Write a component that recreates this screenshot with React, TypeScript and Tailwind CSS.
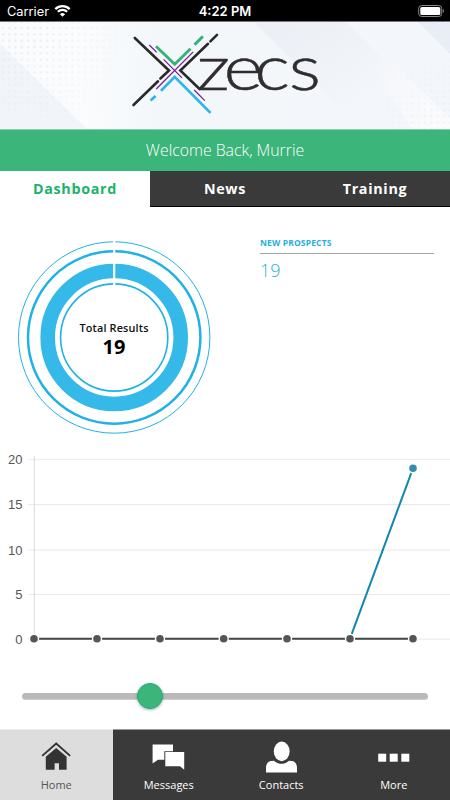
import { useState } from "react";

const tabs = ["Dashboard", "News", "Training"];

const ticks = [
  { label: "20", y: 459.7 },
  { label: "15", y: 504.5 },
  { label: "10", y: 550.1 },
  { label: "5", y: 594.5 },
  { label: "0", y: 639.2 },
];

const pointsX = [34, 97, 160, 223.7, 287, 350, 413];

function StatusBar() {
  return (
    <div className="h-[22px] bg-black border-b border-[#777777] flex items-center justify-between pl-[7px] pr-[5px] text-white font-['Inter',sans-serif] relative">
      <div className="flex items-center gap-[5px]">
        <span className="text-[12.8px] leading-[20px] pt-[2px]">Carrier</span>
        <svg width="17" height="12" viewBox="0 0 16 12" fill="none" stroke="white" strokeWidth="2.2">
          <path d="M0.8 4.1a10.4 10.4 0 0 1 14.4 0" />
          <path d="M3.3 6.8a6.8 6.8 0 0 1 9.4 0" />
          <path d="M8 11.8 5.4 9.2a3.7 3.7 0 0 1 5.2 0z" fill="white" stroke="none" />
        </svg>
      </div>
      <span className="absolute inset-x-0 text-center text-[13px] leading-[20px] font-semibold pt-[1px]">
        4:22 PM
      </span>
      <svg width="27" height="14" viewBox="0 0 27 14">
        <rect x="0.7" y="1.5" width="23" height="11" rx="3" fill="none" stroke="#8a8a8a" />
        <rect x="2.3" y="3" width="20" height="8" rx="1.6" fill="white" />
        <path d="M24.8 5v4c1.5-.6 1.5-3.4 0-4z" fill="#8a8a8a" />
      </svg>
    </div>
  );
}

function Banner() {
  return (
    <svg className="block" width="450" height="107" viewBox="0 22 450 107">
      <defs>
        <pattern id="dots" width="6.3" height="6.3" patternUnits="userSpaceOnUse">
          <circle cx="3" cy="3" r="1" fill="#dce3ec" />
        </pattern>
        <radialGradient id="fade" gradientUnits="userSpaceOnUse" cx="20" cy="22" r="120">
          <stop offset="0" stopColor="white" />
          <stop offset="1" stopColor="black" />
        </radialGradient>
        <radialGradient id="fadeRight" gradientUnits="userSpaceOnUse" cx="440" cy="129" r="80">
          <stop offset="0" stopColor="#999999" />
          <stop offset="1" stopColor="black" />
        </radialGradient>
        <linearGradient id="base" x1="0" x2="1" y1="0" y2="0">
          <stop offset="0" stopColor="#f9fbfd" />
          <stop offset="0.18" stopColor="#fafcfd" />
          <stop offset="0.35" stopColor="#f4f7fa" />
          <stop offset="1" stopColor="#f3f6fa" />
        </linearGradient>
        <linearGradient id="band" gradientUnits="userSpaceOnUse" x1="290" x2="350" y1="22" y2="110">
          <stop offset="0" stopColor="#e8edf4" />
          <stop offset="1" stopColor="#f3f6fa" />
        </linearGradient>
        <linearGradient id="shine" gradientUnits="userSpaceOnUse" x1="370" x2="440" y1="60" y2="129">
          <stop offset="0" stopColor="#fbfbfd" stopOpacity="0" />
          <stop offset="1" stopColor="#fbfbfd" />
        </linearGradient>
        <mask id="maskLeft">
          <rect y="22" width="140" height="107" fill="url(#fade)" />
        </mask>
        <mask id="maskRight">
          <rect x="350" y="22" width="100" height="107" fill="url(#fadeRight)" />
        </mask>
      </defs>
      <rect y="22" width="450" height="107" fill="url(#base)" />
      <path d="M0 44 87 129H0z" fill="#f1f5f9" />
      <path d="M254 22h92l107 107h-92z" fill="url(#band)" opacity="0.7" />
      <path d="M343 22h10l97 97v10h-38z" fill="url(#shine)" />
      <path d="M418 22h32v32z" fill="#e9eef6" />
      <rect y="22" width="140" height="107" fill="url(#dots)" mask="url(#maskLeft)" />
      <rect x="350" y="22" width="100" height="107" fill="url(#dots)" mask="url(#maskRight)" />

      <g fill="none" strokeWidth="2.6">
        <g stroke="#2b2a2b" strokeLinecap="round">
          <path d="M134.8 38 169 70.5l-8.6 8M158 81.3 133.5 105" />
          <path d="M217 34.8l-6.6 6.6M208 43.8 180.3 70.5l19 18.3" />
        </g>
        <path d="M156 46.3l18.7 18 15.8-15.6M194.5 44.8l8.4-8.4" stroke="#34b277" strokeWidth="2.9" />
        <path d="M161 90.7l13.7-13.8 35.8 36M155.6 96l-5 4.6" stroke="#29b6ea" strokeWidth="2.7" />
        <path
          d="M149.3 45l7.4 7.4M163.6 59.3 182 77.8M193.2 51.8 156.2 89M194.2 90l10.6 10.6"
          stroke="#7b139e"
          strokeWidth="1.2"
        />
      </g>
      <text
        className="font-['Lato',sans-serif] font-light"
        transform="translate(196.500 90) scale(1.2 1)"
        x="0 22.6 48.2 76.9"
        fontSize="63"
        fill="#2f2d2e"
        stroke="#2f2d2e"
        strokeWidth="0.5"
      >
        zecs
      </text>
    </svg>
  );
}

function ResultsRing() {
  return (
    <svg className="block" width="196" height="196" viewBox="16 240 196 196">
      <g fill="none" stroke="#1fb2e7">
        <circle cx="114.2" cy="337.5" r="95.7" strokeWidth="1" />
        <circle cx="114.2" cy="337.5" r="86.2" strokeWidth="2.5" />
        <circle cx="114.2" cy="337.5" r="66.5" strokeWidth="14.6" stroke="#35b9e9" />
        <circle cx="114.2" cy="337.5" r="53.6" strokeWidth="1.6" />
      </g>
      <path d="M114.2 240v46" stroke="white" strokeWidth="2.2" />
      <g className="font-['Open_Sans',sans-serif] font-bold" textAnchor="middle" fill="#111111">
        <text x="114" y="332" fontSize="10.9" textLength="69" className="font-semibold">
          Total Results
        </text>
        <text x="114" y="354" fontSize="20" fill="black">
          19
        </text>
      </g>
    </svg>
  );
}

function Chart() {
  return (
    <svg className="block" width="450" height="210" viewBox="0 448 450 210">
      {ticks.map((tick) => (
        <g key={tick.label}>
          <path d={`M28 ${tick.y}H450`} stroke="#e9e9e9" />
          <text
            x="22.5"
            y={tick.y + 4.4}
            textAnchor="end"
            fontSize="13"
            fill="#555555"
            className="font-['Liberation_Sans',sans-serif]"
          >
            {tick.label}
          </text>
        </g>
      ))}
      <path d="M34.3 456v183" stroke="#dddddd" />
      <path d="M34 638.7H413" stroke="#444444" strokeWidth="2" />
      <path d="M350 638.7 413 468.3" stroke="#1088ac" strokeWidth="2" />
      {pointsX.map((x) => (
        <circle key={x} cx={x} cy="638.7" r="4.5" fill="#555555" stroke="white" strokeWidth="1.4" />
      ))}
      <circle cx="413" cy="468.3" r="4.5" fill="#358dae" stroke="white" strokeWidth="1.4" />
    </svg>
  );
}

const navItems = [
  {
    label: "Home",
    icon: (
      <g fill="#333333">
        <path d="M15.2 7 25.6 15.8V28.8H18v-6.5h-4.4v6.5H4.8V15.8z" />
        <path d="M1.2 14.9 15.2 2.6 29.2 14.9" fill="none" stroke="#333333" strokeWidth="1.9" />
        <path d="M3.5 15.6 15.2 5.4 26.9 15.6" fill="none" stroke="#dddddd" strokeWidth="1" />
      </g>
    ),
  },
  {
    label: "Messages",
    icon: (
      <g fill="white">
        <path d="M-0.4 3.5h20.4v6.7h-8.7v8.5H5L-0.4 22.4z" />
        <path d="M12.3 11h18.9v17.7l-4.2-3.5H12.3z" />
      </g>
    ),
  },
  {
    label: "Contacts",
    icon: (
      <g fill="white">
        <ellipse cx="15.7" cy="10.4" rx="7.9" ry="9.8" />
        <path d="M0 31.5v-4.7c0-3.7 2-6.3 5-6.7l3-.3c2 2 4.4 3 7.5 3s5.5-1 7.5-3l3 .3c3 .4 5 3 5 6.7v4.7z" />
      </g>
    ),
  },
  {
    label: "More",
    icon: (
      <g fill="white">
        <rect x="0.2" y="12.7" width="8" height="8" />
        <rect x="11.7" y="12.7" width="8" height="8" />
        <rect x="23.3" y="12.7" width="8" height="8" />
      </g>
    ),
  },
];

export default function App() {
  const [tab, setTab] = useState("Dashboard");

  return (
    <div className="w-[450px] h-[800px] bg-white flex flex-col overflow-hidden font-['Open_Sans',sans-serif]">
      <StatusBar />
      <Banner />
      <div className="h-[42px] bg-[#3cb57a] border-t border-[#8fcdb0] text-white text-[15.8px] leading-[40px] text-center font-light">
        Welcome Back, Murrie
      </div>
      <div className="h-[36px] flex bg-[#3a3a3a]">
        {tabs.map((name) => (
          <button
            key={name}
            type="button"
            onClick={() => setTab(name)}
            className={`flex-1 text-[14.3px] leading-[36px] tracking-[0.7px] font-bold ${
              tab === name ? "bg-white text-[#1db26b]" : "text-white border-b border-black"
            }`}
          >
            {name}
          </button>
        ))}
      </div>
      <div className="flex pt-[33px] pl-[16px] pr-[16px] gap-[48px]">
        <ResultsRing />
        <div className="w-[174px] text-[#25b0df]">
          <div className="border-b border-[#a5a5a5] h-[14px] text-[8.5px] leading-[6px] tracking-[0.15px] font-bold">
            NEW PROSPECTS
          </div>
          <div className="text-[18px] leading-[24px] pt-[4px] font-light">19</div>
        </div>
      </div>
      <div className="pt-[12px]">
        <Chart />
      </div>
      <div className="h-[71px] pt-[35px] px-[22px]">
        <div className="h-[7px] rounded-full bg-[#bababa] border-b border-[#cfcfcf] flex items-center pl-[115px]">
          <div className="w-[26px] h-[26px] rounded-full bg-[#3cb57a] border border-[#16b56c] shadow-[0_1px_3px_rgba(0,0,0,0.3)]" />
        </div>
      </div>
      <div className="h-[71px] flex bg-[#3a3a3a]">
        {navItems.map((item, index) => (
          <button
            key={item.label}
            type="button"
            className={`flex-1 flex flex-col items-center pt-[11px] border-t ${
              index === 0
                ? "bg-[#dddddd] text-[#555555] border-[#eeeeee]"
                : "text-white border-[#999999]"
            }`}
          >
            <svg width="31" height="32" viewBox="0 0 31 32" className="overflow-visible">
              {item.icon}
            </svg>
            <span className="text-[11px] leading-[14px] pt-[5px]">{item.label}</span>
          </button>
        ))}
      </div>
    </div>
  );
}
